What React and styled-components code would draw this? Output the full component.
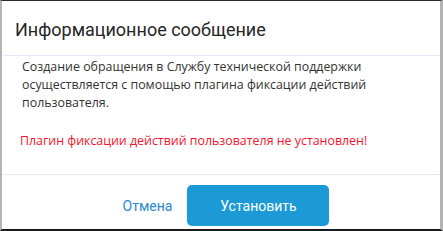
import styled, { createGlobalStyle } from "styled-components";

const GlobalStyle = createGlobalStyle`
  html, body {
    margin: 0;
    padding: 0;
    background: #ffffff;
  }
`;

const Frame = styled.div`
  width: 443px;
  height: 231px;
  box-sizing: border-box;
  border-top: 1px solid #2b2b2b;
  border-left: 2px solid #b3b3b3;
  border-right: 3px solid #b3b3b3;
  border-bottom: 2px solid #1a1a1a;
  background: #ffffff;
  display: flex;
  flex-direction: column;
`;

const Header = styled.div`
  height: 55px;
  box-sizing: border-box;
  padding: 0 0 0 12px;
  display: flex;
  align-items: center;
  border-bottom: 1px solid #e1e9f6;
  margin-left: 1px;
`;

const Title = styled.h2`
  margin: 0;
  padding-top: 3px;
  font-family: Roboto, "Liberation Sans", sans-serif;
  font-size: 18px;
  font-weight: 400;
  color: #262626;
`;

const Body = styled.div`
  height: 119px;
  box-sizing: border-box;
  padding: 2px 16px 0 19px;
  border-bottom: 1px solid #e1e9f6;
  margin-left: 1px;
  font-family: "Open Sans", "DejaVu Sans", sans-serif;
  font-size: 12.4px;
  line-height: 18px;
`;

const Text = styled.p`
  margin: 0;
  color: ${(p) => (p.$error ? "#f5142c" : "#333333")};
  margin-left: ${(p) => (p.$error ? "-2px" : "0")};
  margin-top: ${(p) => (p.$error ? "20px" : "0")};
`;

const Footer = styled.div`
  flex: 1;
  display: flex;
  align-items: center;
  justify-content: center;
  gap: 15px;
  padding-left: 10px;
  padding-top: 7px;
`;

const LinkButton = styled.button`
  border: none;
  background: none;
  padding: 0;
  font-family: Roboto, "Liberation Sans", sans-serif;
  font-size: 14px;
  color: #2a8ad0;
  cursor: pointer;
`;

const PrimaryButton = styled.button`
  width: 142px;
  height: 41px;
  border: none;
  border-radius: 5px;
  background: #1b9ad6;
  color: #ffffff;
  font-family: Roboto, "Liberation Sans", sans-serif;
  font-size: 14px;
  cursor: pointer;
`;

export default function App() {
  return (
    <>
      <GlobalStyle />
      <Frame>
        <Header>
          <Title>Информационное сообщение</Title>
        </Header>
        <Body>
          <Text>
            Создание обращения в Службу технической поддержки
            <br />
            осуществляется с помощью плагина фиксации действий
            <br />
            пользователя.
          </Text>
          <Text $error>Плагин фиксации действий пользователя не установлен!</Text>
        </Body>
        <Footer>
          <LinkButton>Отмена</LinkButton>
          <PrimaryButton>Установить</PrimaryButton>
        </Footer>
      </Frame>
    </>
  );
}
